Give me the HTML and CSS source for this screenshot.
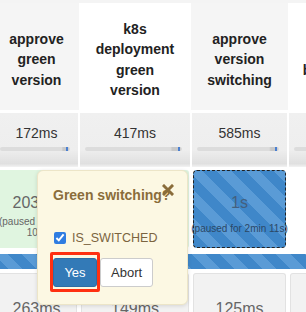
FILE: index.html
```html
<!DOCTYPE html>
<html lang="en">
<head>
  <meta charset="UTF-8" />
  <meta name="viewport" content="width=device-width, initial-scale=1.0"/>
  <title>Stage View</title>
  <link rel="stylesheet" href="styles.css">
</head>
<body>
  <div class="stage-view">
    <div class="grid head">
      <div class="th odd">approve green version</div>
      <div class="th">k8s deployment green version</div>
      <div class="th odd">approve version switching</div>
      <div class="th">shutdown blue version</div>
    </div>

    <div class="grid avg">
      <div class="avg-cell">172ms<div class="bar"><span></span></div></div>
      <div class="avg-cell">417ms<div class="bar"><span></span></div></div>
      <div class="avg-cell">585ms<div class="bar"><span></span></div></div>
      <div class="avg-cell">&nbsp;<div class="bar"><span></span></div></div>
    </div>

    <div class="grid run">
      <div class="cell success">203ms<div class="paused">(paused for 2min 10s)</div></div>
      <div class="cell success">1s<div class="paused">(paused for 1min 3s)</div></div>
      <div class="cell waiting">1s<div class="paused">(paused for 2min 11s)</div></div>
      <div class="cell empty"></div>
    </div>

    <div class="progress"></div>

    <div class="grid run">
      <div class="cell done">263ms</div>
      <div class="cell done">149ms</div>
      <div class="cell done">125ms</div>
      <div class="cell done">98ms</div>
    </div>
  </div>

  <div class="popover">
    <svg class="close" width="12" height="12" viewBox="0 0 12 12">
      <path d="M2 2 L10 10 M10 2 L2 10" stroke="#8a6d3b" stroke-width="3" stroke-linecap="square"/>
    </svg>
    <div class="title">Green switching?</div>
    <label class="param"><input type="checkbox" checked> IS_SWITCHED</label>
    <div class="actions">
      <span class="mark"><button class="btn primary">Yes</button></span>
      <button class="btn">Abort</button>
    </div>
  </div>
</body>
</html>
```

FILE: styles.css
```css
body {
  margin: 0;
  font-family: 'Liberation Sans', Arial, sans-serif;
  color: #333;
  background: #fff;
  overflow: hidden;
  width: 306px;
  height: 312px;
  position: relative;
}
.stage-view {
  margin-left: -6px;
  width: 420px;
  border-top: 3px solid #f4f4f4;
}
.grid {
  display: grid;
  grid-template-columns: 85px 112px 97px 112px;
}
.th {
  height: 107px;
  padding: 6px 11px 0;
  display: flex;
  align-items: center;
  justify-content: center;
  text-align: center;
  font-weight: bold;
  font-size: 14px;
  line-height: 20.5px;
  color: #222;
  box-sizing: border-box;
}
.th.odd {
  background: #f5f5f5;
}
.avg {
  margin-top: 3px;
}
.avg-cell {
  height: 54px;
  border-left: 1px solid #fff;
  border-right: 1px solid #fff;
  background: linear-gradient(to bottom, #f0f0f0 0, #eeeeee 68%, #e0e0e0 94%, #f3f3f3 100%);
  text-align: center;
  font-size: 14px;
  padding-top: 12px;
  box-sizing: border-box;
  line-height: 16px;
}
.bar {
  margin: 6px 8px 0 5px;
  height: 4px;
  border-radius: 2px;
  background: linear-gradient(to right, #dcdcdc 0, #dcdcdc 88%, #c8c8c8 90%, #c8c8c8 97%, #dcdcdc 100%);
  position: relative;
}
.bar span {
  position: absolute;
  right: 2px;
  top: 0;
  width: 2px;
  height: 4px;
  background: #4a7fd0;
}
.run {
  margin-top: 3px;
}
.cell {
  margin: 0 2px;
  height: 78px;
  border-radius: 3px;
  text-align: center;
  font-size: 16px;
  line-height: 22px;
  color: #666;
  padding-top: 22px;
  box-sizing: border-box;
}
.cell.success {
  background: #e0f5e0;
}
.cell.waiting {
  border: 1px dashed #222;
  border-radius: 4px;
  padding-top: 21px;
  color: #44607e;
  background: repeating-linear-gradient(45deg, #3f87c9 0, #3f87c9 10px, #5a9bd6 10px, #5a9bd6 20px);
}
.cell.empty {
  background: #fff;
}
.cell.done {
  background: #f2f2f2;
  border: 1px solid #e2e2e2;
  border-bottom: none;
  padding-top: 24px;
}
.paused {
  font-size: 10px;
  line-height: 11px;
  margin-top: 2px;
  white-space: normal;
}
.waiting .paused {
  white-space: nowrap;
  margin-top: 9px;
  margin-left: -4px;
  margin-right: -4px;
  color: #2c4866;
}
.progress {
  margin-top: 6px;
  height: 15px;
  background: repeating-linear-gradient(45deg, #3f87c9 0, #3f87c9 10px, #5a9bd6 10px, #5a9bd6 20px);
}
.run + .progress + .run {
  margin-top: 4px;
}

.popover {
  position: absolute;
  left: 37px;
  top: 170px;
  width: 151px;
  height: 135px;
  box-sizing: border-box;
  background: #fcf8e3;
  border: 1px solid #ece5c8;
  border-radius: 6px;
  box-shadow: 0 1px 4px rgba(0,0,0,0.12);
  padding: 15px 0 0 15px;
}
.close {
  position: absolute;
  top: 13px;
  right: 13px;
}
.title {
  font-weight: bold;
  font-size: 14px;
  line-height: 18px;
  color: #8a6d3b;
}
.param {
  display: flex;
  align-items: center;
  margin-top: 26px;
  font-size: 12.5px;
  color: #7b6440;
  line-height: 16px;
}
.param input {
  margin: 0 6px 0 1px;
  width: 12px;
  height: 12px;
  accent-color: #2f7de1;
}
.actions {
  display: flex;
  margin-top: 6px;
  margin-left: -3px;
  align-items: flex-start;
}
.mark {
  display: inline-block;
  border: 3px solid #ff3010;
  border-radius: 2px;
  padding: 3px 0 2px 0;
}
.btn {
  font-family: 'Liberation Sans', Arial, sans-serif;
  font-size: 13px;
  height: 29px;
  padding: 0 10px;
  border: 1px solid #ccc;
  border-radius: 3px;
  background: #fff;
  color: #333;
  margin-top: 6px;
}
.btn.primary {
  width: 44px;
  margin-top: 0;
  background: #337ab7;
  border-color: #2e6da4;
  color: #fff;
  padding: 0;
}
```
